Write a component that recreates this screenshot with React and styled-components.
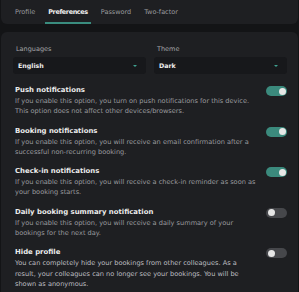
import React, { useState } from "react";
import styled, { createGlobalStyle } from "styled-components";

const GlobalStyle = createGlobalStyle`
  html, body {
    margin: 0;
    padding: 0;
    background-color: #131416;
    font-family: "DejaVu Sans", "Open Sans", sans-serif;
  }
  * { box-sizing: border-box; }
`;

const tabs = ["Profile", "Preferences", "Password", "Two-factor"];

const settings = [
  {
    title: "Push notifications",
    text: "If you enable this option, you turn on push notifications for this device. This option does not affect other devices/browsers.",
    on: true,
  },
  {
    title: "Booking notifications",
    text: "If you enable this option, you will receive an email confirmation after a successful non-recurring booking.",
    on: true,
  },
  {
    title: "Check-in notifications",
    text: "If you enable this option, you will receive a check-in reminder as soon as your booking starts.",
    on: true,
  },
  {
    title: "Daily booking summary notification",
    text: "If you enable this option, you will receive a daily summary of your bookings for the next day.",
    on: false,
  },
  {
    title: "Hide profile",
    text: "You can completely hide your bookings from other colleagues. As a result, your colleagues can no longer see your bookings. You will be shown as anonymous.",
    on: false,
    bright: true,
  },
];

const App = () => {
  const [values, setValues] = useState(settings.map((s) => s.on));

  const toggle = (i) => {
    setValues((v) => v.map((x, j) => (j === i ? !x : x)));
  };

  return (
    <>
      <GlobalStyle />
      <StPage>
        <StTabBar>
          {tabs.map((t) => (
            <StTab key={t} $active={t === "Preferences"}>{t}</StTab>
          ))}
        </StTabBar>

        <StCard>
          <StSelectGrid>
            <StField>
              <StLabel>Languages</StLabel>
              <StSelect>
                <span>English</span>
                <StArrow />
              </StSelect>
            </StField>
            <StField>
              <StLabel>Theme</StLabel>
              <StSelect>
                <span>Dark</span>
                <StArrow />
              </StSelect>
            </StField>
          </StSelectGrid>

          <StList>
            {settings.map((s, i) => (
              <StRow key={s.title}>
                <StRowText>
                  <h4>{s.title}</h4>
                  <StDesc $bright={s.bright}>{s.text}</StDesc>
                </StRowText>
                <StSwitch $on={values[i]} onClick={() => toggle(i)} />
              </StRow>
            ))}
          </StList>
        </StCard>
      </StPage>
    </>
  );
};

export default App;

const StPage = styled.div`
  display: flex;
  flex-direction: column;
  gap: 8px;
  padding: 0 1px;
  height: 292px;
  overflow: hidden;
`;

const StTabBar = styled.div`
  display: flex;
  align-items: stretch;
  gap: 7px;
  height: 24px;
  padding-left: 11px;
  background-color: #1e1f22;
  border-radius: 0 0 6px 6px;
`;

const StTab = styled.div`
  display: flex;
  align-items: center;
  padding: 0 3px;
  font-size: 6.5px;
  font-weight: ${(p) => (p.$active ? 700 : 400)};
  letter-spacing: ${(p) => (p.$active ? "-0.4px" : "0")};
  color: ${(p) => (p.$active ? "#f0f0f0" : "#9a9b9f")};
  border-bottom: 2px solid ${(p) => (p.$active ? "#3a8d7f" : "transparent")};
  border-top: 2px solid transparent;
`;

const StCard = styled.div`
  flex: 1;
  background-color: #1e1f22;
  border-radius: 6px 6px 0 0;
  padding: 13px 11px 0 12px;
`;

const StSelectGrid = styled.div`
  display: grid;
  grid-template-columns: 1fr 1fr;
  gap: 8px;
`;

const StField = styled.div`
  display: flex;
  flex-direction: column;
  gap: 4px;
`;

const StLabel = styled.label`
  padding-left: 3px;
  font-size: 6.5px;
  line-height: 8px;
  color: #a4a5a8;
`;

const StSelect = styled.div`
  display: flex;
  align-items: center;
  justify-content: space-between;
  height: 17px;
  padding: 0 9px 0 5px;
  background-color: #17181b;
  border-radius: 3px;
  font-size: 6.3px;
  font-weight: 700;
  color: #eeeeee;
`;

const StArrow = styled.span`
  width: 0;
  height: 0;
  border-left: 2.5px solid transparent;
  border-right: 2.5px solid transparent;
  border-top: 2.5px solid #3fa08f;
`;

const StList = styled.div`
  display: flex;
  flex-direction: column;
  gap: 9px;
  margin-top: 11px;
`;

const StRow = styled.div`
  display: flex;
  align-items: flex-start;
  justify-content: space-between;
  gap: 8px;
`;

const StRowText = styled.div`
  width: 244px;
  padding-left: 2px;

  h4 {
    margin: 0;
    font-size: 6.9px;
    line-height: 11px;
    font-weight: 700;
    color: #ececec;
  }
`;

const StDesc = styled.p`
  margin: 0;
  font-size: 6.6px;
  line-height: 10.3px;
  color: ${(p) => (p.$bright ? "#bdbec1" : "#9a9b9f")};
`;

const StSwitch = styled.button`
  position: relative;
  flex-shrink: 0;
  width: 21px;
  height: 10px;
  margin-top: 1px;
  padding: 0;
  border: none;
  border-radius: 5px;
  cursor: pointer;
  background-color: ${(p) => (p.$on ? "#3b8a7d" : "#46474b")};

  &::after {
    content: "";
    position: absolute;
    top: 1.5px;
    left: ${(p) => (p.$on ? "12.5px" : "1.5px")};
    width: 7px;
    height: 7px;
    border-radius: 50%;
    background-color: #e6e6e6;
  }
`;
